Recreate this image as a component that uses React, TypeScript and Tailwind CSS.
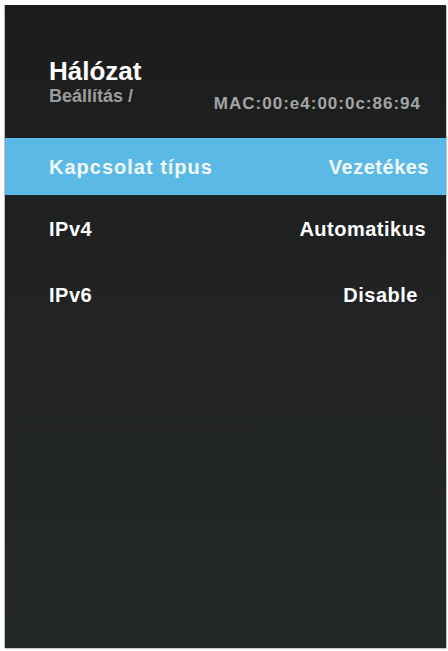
import React from "react";

const ROWS = [
  { label: "Kapcsolat típus", value: "Vezetékes", h: "h-[57px]", pr: "pr-[17px]", track: "tracking-[1px]", active: true },
  { label: "IPv4", value: "Automatikus", h: "h-[67px]", pr: "pr-[20px]", track: "tracking-[0.5px]", active: false },
  { label: "IPv6", value: "Disable", h: "h-[66px]", pr: "pr-[28px]", track: "tracking-[0.5px]", active: false },
];

export default function App() {
  return (
    <div className="h-[651px] w-[448px] bg-white pb-[3px] pl-[4px] pr-[2px] pt-[5px] font-['Liberation_Sans',Arial,sans-serif]">
      <div className="flex h-full flex-col border-l border-[#bdbdbd] bg-gradient-to-b from-[#1b1c1c] via-[#212324] to-[#242728] shadow-[1px_1px_0_#c8c8c8]">
        {/* header */}
        <div className="flex h-[133px] flex-col pl-[44px] pr-[25px] pt-[53px]">
          <h1 className="text-[26px] font-bold leading-none text-white">Hálózat</h1>
          <div className="mt-[3px] flex items-start justify-between">
            <span className="text-[18px] font-bold leading-none text-[#9c9c9c]">Beállítás /</span>
            <span className="mt-[8px] text-[17px] font-bold leading-none tracking-[1px] text-[#a5a5a5]">
              MAC:00:e4:00:0c:86:94
            </span>
          </div>
        </div>

        {/* settings list */}
        <div className="flex flex-col">
          {ROWS.map((r) => (
            <div
              key={r.label}
              className={`flex items-center justify-between pl-[44px] ${r.h} ${r.pr} ${
                r.active ? "bg-[#5bbae5] text-[#f2f9fc]" : "text-white"
              }`}
            >
              <span className={`text-[20px] font-bold leading-none ${r.track}`}>{r.label}</span>
              <span className="text-[20px] font-bold leading-none tracking-[0.5px]">{r.value}</span>
            </div>
          ))}
        </div>
      </div>
    </div>
  );
}
